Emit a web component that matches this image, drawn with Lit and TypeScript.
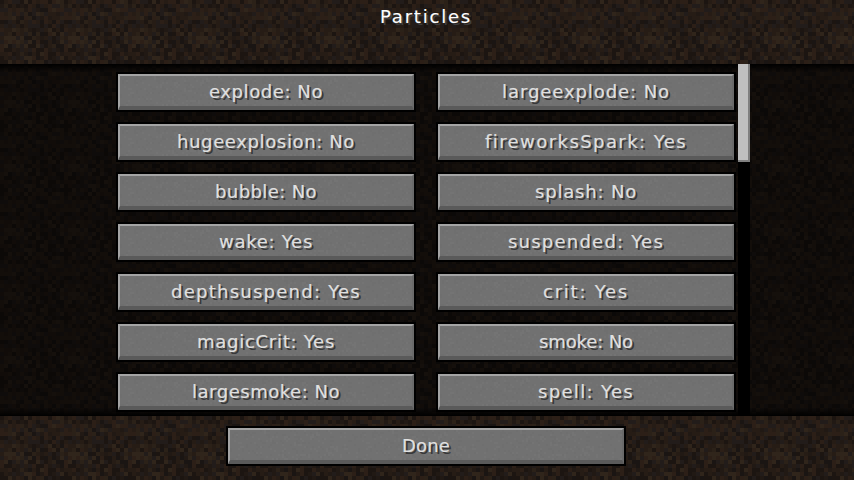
import { LitElement, html, css, svg } from "lit";
import { customElement } from "lit/decorators.js";

const rows: [string, string][] = [
  ["explode: No", "largeexplode: No"],
  ["hugeexplosion: No", "fireworksSpark: Yes"],
  ["bubble: No", "splash: No"],
  ["wake: Yes", "suspended: Yes"],
  ["depthsuspend: Yes", "crit: Yes"],
  ["magicCrit: Yes", "smoke: No"],
  ["largesmoke: No", "spell: Yes"],
];

const FONT = '18px "DejaVu Sans"';
const advances: Record<string, number> = { i: 4, l: 6, t: 10, f: 10, k: 10, ":": 4, " ": 8, I: 8 };
const measureCtx = document.createElement("canvas").getContext("2d")!;

/* Letter spacing that gives a label the width of the game font's advances. */
function spacingFor(label: string): number {
  measureCtx.font = FONT;
  const natural = measureCtx.measureText(label).width;
  let target = 0;
  for (const ch of label) target += advances[ch] ?? 12;
  return (target - natural) / label.length;
}

function rng(seed: number) {
  let s = seed;
  return () => {
    s = (s * 1664525 + 1013904223) >>> 0;
    return ((s >>> 8) & 0xffff) / 65536;
  };
}

const dirtPalette = ["#1c1511", "#211914", "#261c15", "#2b2118", "#30251b", "#221c1a", "#2c1f17", "#1a1513"];
const dirtRects = (() => {
  const r = rng(77);
  const out = [];
  for (let y = 0; y < 16; y++)
    for (let x = 0; x < 16; x++) {
      const c = dirtPalette[Math.floor(r() * dirtPalette.length)];
      out.push(svg`<rect x=${x * 4} y=${y * 4} width="4" height="4" fill=${c}></rect>`);
    }
  return out;
})();

const stoneRects = (() => {
  const r = rng(5);
  const out = [];
  for (let y = 0; y < 32; y++)
    for (let x = 0; x < 64; x++) {
      const v = r();
      if (v < 0.22) {
        const light = r() > 0.5;
        out.push(
          svg`<rect x=${x * 2} y=${y * 2} width="2" height="2" fill=${light ? "#fff" : "#000"} opacity=${0.018}></rect>`
        );
      }
    }
  return out;
})();

const dirtDefs = svg`<pattern id="dirt" width="64" height="64" patternUnits="userSpaceOnUse">${dirtRects}</pattern>`;

@customElement("app-root")
export class AppRoot extends LitElement {
  static styles = css`
    :host {
      display: block;
      width: 854px;
      height: 480px;
      overflow: hidden;
      font-family: "DejaVu Sans", sans-serif;
      background: #000;
    }
    .defs {
      position: absolute;
    }
    .screen {
      display: grid;
      grid-template-rows: 64px 352px 64px;
      height: 480px;
    }
    .band {
      position: relative;
      overflow: hidden;
    }
    .bg {
      position: absolute;
      inset: 0;
      width: 100%;
      height: 100%;
    }
    .dim {
      position: absolute;
      inset: 0;
      background: rgba(0, 0, 0, 0.55);
    }
    .shade {
      position: absolute;
      inset: 0;
      background: linear-gradient(#000 0, rgba(0, 0, 0, 0) 8px, rgba(0, 0, 0, 0) calc(100% - 8px), #000 100%);
    }
    .header {
      display: flex;
      justify-content: center;
      padding: 7px 2px 0 0;
      box-sizing: border-box;
    }
    .title {
      position: relative;
      color: #fff;
      font-size: 18px;
      line-height: 20px;
      height: 20px;
      white-space: pre;
      -webkit-text-stroke: 0.15px currentColor;
      text-shadow: 2px 2px 0 #3f3f3f;
    }
    .list {
      display: flex;
      padding-left: 118px;
    }
    .grid {
      position: relative;
      display: grid;
      grid-template-columns: 296px 296px;
      grid-auto-rows: 36px;
      column-gap: 24px;
      row-gap: 14px;
      padding-top: 10px;
      align-content: start;
    }
    .track {
      position: relative;
      width: 12px;
      margin-left: 4px;
      background: #000;
    }
    .thumb {
      height: 98px;
      box-sizing: border-box;
      background: #c0c0c0;
      border-right: 2px solid #808080;
      border-bottom: 2px solid #808080;
    }
    .btn {
      position: relative;
      display: flex;
      align-items: center;
      justify-content: center;
      height: 36px;
      box-sizing: border-box;
      background: #717171;
      box-shadow: 0 0 0 2px #000;
      border-top: 2px solid #a4a4a4;
      border-left: 2px solid #a4a4a4;
      border-right: 2px solid #6a6a6a;
      border-bottom: 4px solid #5a5a5a;
      color: #e0e0e0;
      font-size: 18px;
      -webkit-text-stroke: 0.15px currentColor;
      text-shadow: 2px 2px 0 #383838;
      overflow: hidden;
    }
    .btn svg {
      position: absolute;
      left: 0;
      top: 0;
      width: 100%;
      height: 100%;
    }
    .btn span {
      position: relative;
      white-space: pre;
    }
    .footer {
      display: flex;
      justify-content: center;
      padding: 12px 2px 0 0;
      box-sizing: border-box;
    }
    .done {
      width: 396px;
    }
  `;

  private button(label: string, extra = "") {
    return html`<div class="btn ${extra}">
      <svg aria-hidden="true"><rect width="100%" height="100%" fill="url(#stone)"></rect></svg>
      <span style="letter-spacing:${spacingFor(label)}px">${label}</span>
    </div>`;
  }

  render() {
    return html`
      <svg class="defs" width="0" height="0">
        <defs>
          ${dirtDefs}
          <pattern id="stone" width="128" height="64" patternUnits="userSpaceOnUse">${stoneRects}</pattern>
        </defs>
      </svg>
      <div class="screen">
        <div class="band header">
          <svg class="bg" aria-hidden="true"><rect width="100%" height="100%" fill="url(#dirt)"></rect></svg>
          <div class="title" style="letter-spacing:${spacingFor("Particles")}px">Particles</div>
        </div>
        <div class="band list">
          <svg class="bg" aria-hidden="true"><rect width="100%" height="100%" fill="url(#dirt)"></rect></svg>
          <div class="dim"></div>
          <div class="shade"></div>
          <div class="grid">
            ${rows.map(([a, b]) => html`${this.button(a)}${this.button(b)}`)}
          </div>
          <div class="track"><div class="thumb"></div></div>
        </div>
        <div class="band footer">
          <svg class="bg" aria-hidden="true"><rect width="100%" height="100%" fill="url(#dirt)"></rect></svg>
          ${this.button("Done", "done")}
        </div>
      </div>
    `;
  }
}
